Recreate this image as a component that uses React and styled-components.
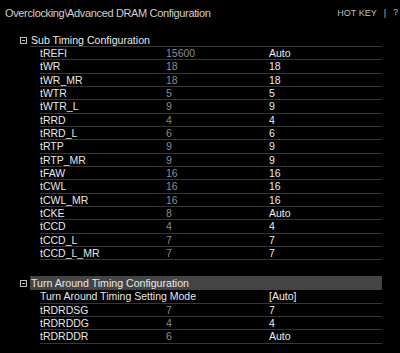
import React from 'react'
import styled, { createGlobalStyle } from 'styled-components'

const Global = createGlobalStyle`
  body {
    margin: 0;
    background: #000;
    font-family: "Liberation Sans", Arial, sans-serif;
  }
`

const Screen = styled.div`
  width: 400px;
  height: 353px;
  overflow: hidden;
  background: #000;
  color: #e4e4e4;
`

const TopBar = styled.div`
  height: 25px;
  display: flex;
  align-items: center;
  justify-content: space-between;
  padding-left: 5px;
`

const Path = styled.div`
  font-size: 11px;
  color: #cfcfcf;
  letter-spacing: -0.35px;
`

const HotKey = styled.div`
  display: flex;
  align-items: center;
  gap: 7px;
  font-size: 9px;
  color: #bdbdbd;
  margin-right: 2px;
  white-space: nowrap;
`

const HelpDot = styled.span`
  width: 5px;
  height: 9px;
  overflow: hidden;
  font-size: 9px;
  line-height: 9px;
`

const Section = styled.div`
  margin-top: ${p => p.$top}px;
`

const SectionHead = styled.div`
  display: flex;
  align-items: center;
  gap: 3px;
  height: ${p => p.$h}px;
  padding-left: 20px;
  margin-right: 18px;
  font-size: 10.6px;
  color: #e8e8e8;
`

const HeadLabel = styled.div`
  flex: 1;
  height: 100%;
  display: flex;
  align-items: center;
  padding-left: 1px;
  background: ${p => (p.$active ? '#444' : 'transparent')};
  border-bottom: 1px solid ${p => (p.$active ? '#444' : '#3a3a3a')};
  box-sizing: border-box;
`

const Collapse = styled.span`
  width: 7px;
  height: 7px;
  border: 1px solid #bbb;
  box-sizing: border-box;
  position: relative;
  flex: none;

  &::after {
    content: '';
    position: absolute;
    left: 1px;
    right: 1px;
    top: 2px;
    height: 1px;
    background: #bbb;
  }
`

const Row = styled.div`
  display: grid;
  grid-template-columns: 126px 103px 1fr;
  align-items: center;
  height: 13.33px;
  margin-left: 40px;
  margin-right: 18px;
  border-bottom: 1px solid #363636;
  box-sizing: border-box;
  font-size: 10.5px;
  white-space: nowrap;
`

const Name = styled.span`
  color: #e6e6e6;
`

const Current = styled.span`
  color: #8c8c8c;
`

const Setting = styled.span`
  color: #ececec;
`

const subTimings = [
  ['tREFI', '15600', 'Auto'],
  ['tWR', '18', '18'],
  ['tWR_MR', '18', '18'],
  ['tWTR', '5', '5'],
  ['tWTR_L', '9', '9'],
  ['tRRD', '4', '4'],
  ['tRRD_L', '6', '6'],
  ['tRTP', '9', '9'],
  ['tRTP_MR', '9', '9'],
  ['tFAW', '16', '16'],
  ['tCWL', '16', '16'],
  ['tCWL_MR', '16', '16'],
  ['tCKE', '8', 'Auto'],
  ['tCCD', '4', '4'],
  ['tCCD_L', '7', '7'],
  ['tCCD_L_MR', '7', '7'],
]

const turnAround = [
  ['Turn Around Timing Setting Mode', '', '[Auto]'],
  ['tRDRDSG', '7', '7'],
  ['tRDRDDG', '4', '4'],
  ['tRDRDDR', '6', 'Auto'],
]

const Rows = ({ items }) =>
  items.map(([name, cur, set]) => (
    <Row key={name}>
      <Name>{name}</Name>
      <Current>{cur}</Current>
      <Setting>{set}</Setting>
    </Row>
  ))

const App = () => (
  <Screen>
    <Global />
    <TopBar>
      <Path>Overclocking\Advanced DRAM Configuration</Path>
      <HotKey>
        <span>HOT KEY</span>
        <span>|</span>
        <HelpDot>?</HelpDot>
      </HotKey>
    </TopBar>

    <Section $top={9}>
      <SectionHead $h={13}>
        <Collapse />
        <HeadLabel>Sub Timing Configuration</HeadLabel>
      </SectionHead>
      <Rows items={subTimings} />
    </Section>

    <Section $top={16}>
      <SectionHead $h={14}>
        <Collapse />
        <HeadLabel $active>Turn Around Timing Configuration</HeadLabel>
      </SectionHead>
      <Rows items={turnAround} />
    </Section>
  </Screen>
)

export default App
